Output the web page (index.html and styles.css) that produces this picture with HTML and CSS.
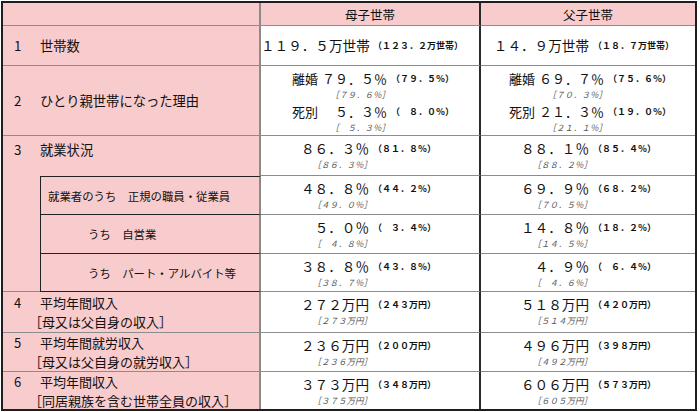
FILE: index.html
```html
<!DOCTYPE html>
<html lang="ja">
<head>
<meta charset="utf-8">
<title>ひとり親世帯の状況</title>
<link rel="stylesheet" href="styles.css">
</head>
<body>
<div class="sheet">
  <div class="c lab full hd"></div>
  <div class="c v hd">母子世帯</div>
  <div class="c v hd last">父子世帯</div>

  <div class="c lab full mid"><span class="no">1</span><span class="t">世帯数</span></div>
  <div class="c v mid"><div class="vg"><span class="m">１１９．５万世帯</span><span class="p">（１２３．２万世帯）</span></div></div>
  <div class="c v mid last"><div class="vg"><span class="m">１４．９万世帯</span><span class="p">（１８．７万世帯）</span></div></div>

  <div class="c lab full mid"><span class="no">2</span><span class="t">ひとり親世帯になった理由</span></div>
  <div class="c v"><div class="vg wide">
    <span class="m sp"><span class="k">離婚</span><span>７９．５％</span></span><span class="p">（７９．５％）</span>
    <span class="b">［７９．６％］</span>
    <span class="m sp g2"><span class="k">死別</span><span>５．３％</span></span><span class="p g2">（　８．０％）</span>
    <span class="b">［　５．３％］</span>
  </div></div>
  <div class="c v last"><div class="vg wide">
    <span class="m sp"><span class="k">離婚</span><span>６９．７％</span></span><span class="p">（７５．６％）</span>
    <span class="b">［７０．３％］</span>
    <span class="m sp g2"><span class="k">死別</span><span>２１．３％</span></span><span class="p g2">（１９．０％）</span>
    <span class="b">［２１．１％］</span>
  </div></div>

  <div class="c lab full top nob"><span class="no">3</span><span class="t">就業状況</span></div>
  <div class="c v"><div class="vg"><span class="m">８６．３％</span><span class="p">（８１．８％）</span><span class="b">［８６．３％］</span></div></div>
  <div class="c v last"><div class="vg"><span class="m">８８．１％</span><span class="p">（８５．４％）</span><span class="b">［８８．２％］</span></div></div>

  <div class="c indent"></div>
  <div class="c sub s1 mid"><span class="st">就業者のうち　正規の職員・従業員</span></div>
  <div class="c v"><div class="vg"><span class="m">４８．８％</span><span class="p">（４４．２％）</span><span class="b">［４９．０％］</span></div></div>
  <div class="c v last"><div class="vg"><span class="m">６９．９％</span><span class="p">（６８．２％）</span><span class="b">［７０．５％］</span></div></div>

  <div class="c sub mid"><span class="st in">うち　自営業</span></div>
  <div class="c v"><div class="vg"><span class="m">５．０％</span><span class="p">（　３．４％）</span><span class="b">［　４．８％］</span></div></div>
  <div class="c v last"><div class="vg"><span class="m">１４．８％</span><span class="p">（１８．２％）</span><span class="b">［１４．５％］</span></div></div>

  <div class="c sub mid"><span class="st in">うち　パート・アルバイト等</span></div>
  <div class="c v"><div class="vg"><span class="m">３８．８％</span><span class="p">（４３．８％）</span><span class="b">［３８．７％］</span></div></div>
  <div class="c v last"><div class="vg"><span class="m">４．９％</span><span class="p">（　６．４％）</span><span class="b">［　４．６％］</span></div></div>

  <div class="c lab full two"><div class="lb"><div class="ln"><span class="no">4</span><span class="t">平均年間収入</span></div><div class="ln2">［母又は父自身の収入］</div></div></div>
  <div class="c v"><div class="vg"><span class="m">２７２万円</span><span class="p">（２４３万円）</span><span class="b">［２７３万円］</span></div></div>
  <div class="c v last"><div class="vg"><span class="m">５１８万円</span><span class="p">（４２０万円）</span><span class="b">［５１４万円］</span></div></div>

  <div class="c lab full two"><div class="lb"><div class="ln"><span class="no">5</span><span class="t">平均年間就労収入</span></div><div class="ln2">［母又は父自身の就労収入］</div></div></div>
  <div class="c v"><div class="vg"><span class="m">２３６万円</span><span class="p">（２００万円）</span><span class="b">［２３６万円］</span></div></div>
  <div class="c v last"><div class="vg"><span class="m">４９６万円</span><span class="p">（３９８万円）</span><span class="b">［４９２万円］</span></div></div>

  <div class="c lab full two end"><div class="lb"><div class="ln"><span class="no">6</span><span class="t">平均年間収入</span></div><div class="ln2">［同居親族を含む世帯全員の収入］</div></div></div>
  <div class="c v end"><div class="vg"><span class="m">３７３万円</span><span class="p">（３４８万円）</span><span class="b">［３７５万円］</span></div></div>
  <div class="c v last end"><div class="vg"><span class="m">６０６万円</span><span class="p">（５７３万円）</span><span class="b">［６０５万円］</span></div></div>
</div>
</body>
</html>
```
FILE: styles.css
```css
* { box-sizing: border-box; }
html, body { margin: 0; padding: 0; background: #ffffff; }
body {
  font-family: "Noto Sans CJK JP", "Noto Sans", sans-serif;
  color: #111;
  width: 700px;
  height: 412px;
  overflow: hidden;
}
.sheet {
  margin: 1px 0 0 1px;
  width: 696px;
  height: 410px;
  border: 2px solid #1e1e1e;
  display: grid;
  grid-template-columns: 37px 221px 220px 214px;
  grid-template-rows: 23px 40px 70px 40px 39px 39px 38px 41px 39px 37px;
}
.c {
  border-bottom: 1px solid #8c8c8c;
  min-width: 0;
}
.c.end { border-bottom: none; }
.lab, .sub, .indent {
  background: #f8cbcc;
  border-right: 2px solid #8a8a8a;
}
.indent {
  grid-column: 1;
  grid-row: 5 / span 3;
  border-right: none;
  border-bottom: 1px solid #8c8c8c;
}
.full { grid-column: 1 / span 2; }
.hd { background: #f8cbcc; }
.v {
  border-right: 2px solid #2a2a2a;
  padding-top: 4px;
}
.v.last { border-right: none; }
.v.hd {
  padding-top: 0;
  display: flex;
  align-items: center;
  justify-content: center;
  font-size: 12.5px;
}
.mid { display: flex; align-items: center; padding-top: 0; }
.lab { font-size: 13.3px; line-height: 17px; display: flex; }
.lab.top { padding-top: 5px; }
.lab.two { align-items: center; font-size: 13px; line-height: 19px; }
.lab.nob { border-bottom: none; }
.no { width: 37px; padding-left: 11px; flex: none; }
.ln { display: flex; }
.ln2 { padding-left: 26px; white-space: nowrap; }
.sub {
  grid-column: 2;
  border-left: 1px solid #222;
  border-bottom: 1px solid #222;
  font-size: 11.4px;
}
.sub.s1 { border-top: 1px solid #222; }
.st { padding-left: 7px; white-space: nowrap; }
.st.in { padding-left: 47px; }
.vg {
  display: grid;
  grid-template-columns: 108px auto;
  column-gap: 4px;
  align-items: center;
}
.vg.wide { grid-template-columns: 126px auto; }
.last .vg.wide { grid-template-columns: 123px auto; }
.m {
  grid-column: 1;
  text-align: right;
  font-size: 13.6px;
  line-height: 17px;
  white-space: nowrap;
}
.m.sp {
  display: flex;
  justify-content: space-between;
  padding-left: 31px;
  font-size: 13px;
}
.last .m.sp { padding-left: 28px; }
.g2 { margin-top: 2px; }
.p {
  grid-column: 2;
  font-size: 9px;
  font-weight: bold;
  white-space: nowrap;
}
.b {
  grid-column: 1;
  text-align: right;
  font-size: 8.5px;
  font-style: italic;
  color: #555;
  line-height: 14px;
  margin-right: -3px;
  white-space: nowrap;
}
```
